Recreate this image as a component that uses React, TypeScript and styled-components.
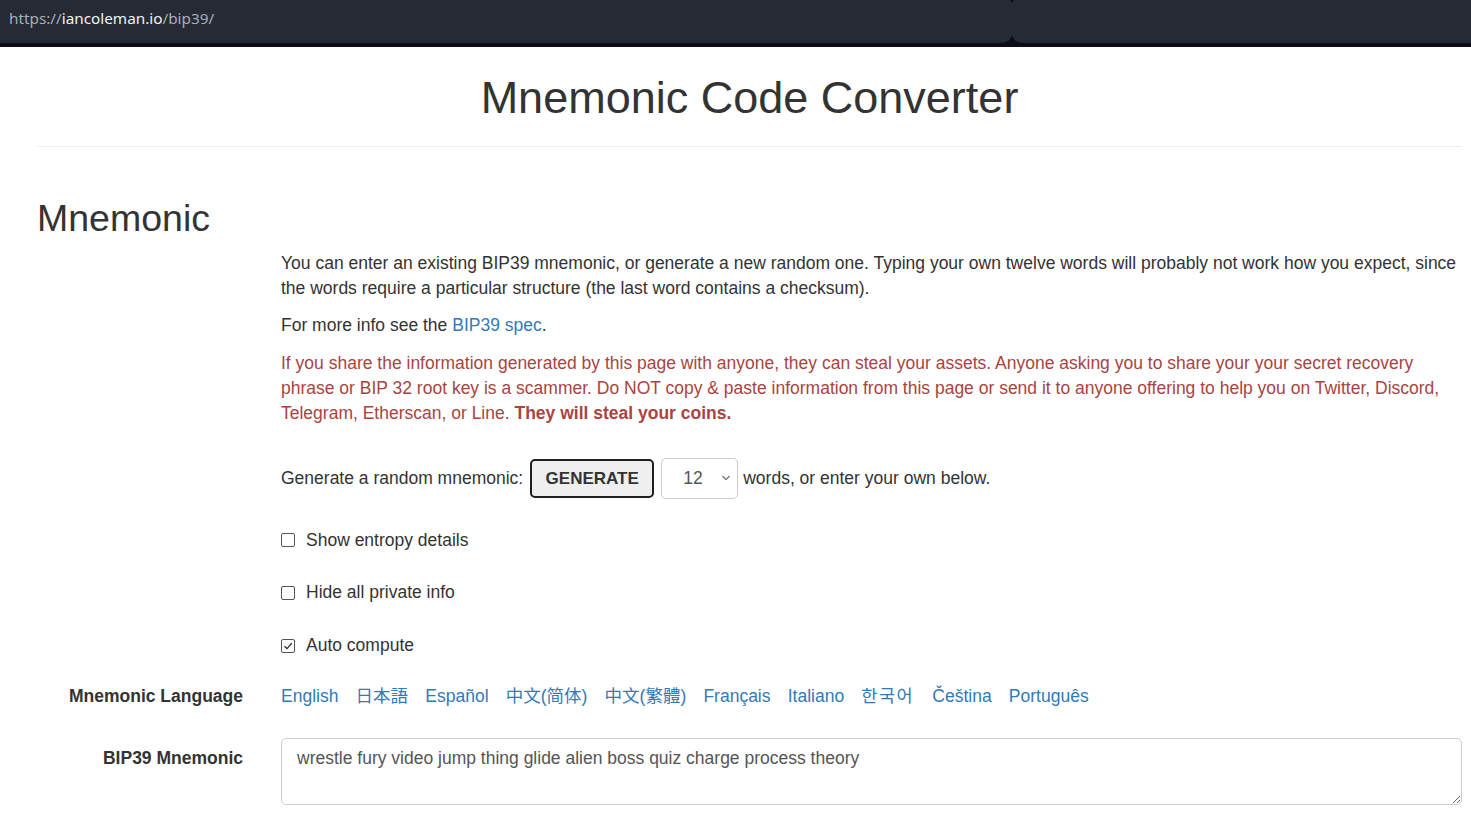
import * as React from "react"
import styled, { createGlobalStyle } from "styled-components"

const GlobalStyle = createGlobalStyle`
  html, body {
    margin: 0;
    padding: 0;
    background: #fff;
  }
  body {
    font-family: "Liberation Sans", Arial, "Noto Sans CJK SC", sans-serif;
    font-size: 17.5px;
    line-height: 25px;
    color: #333;
  }
  * { box-sizing: border-box; }
`

const languages = [
  { name: "English" },
  { name: "日本語", lang: "ja" },
  { name: "Español" },
  { name: "中文(简体)", lang: "zh-CN" },
  { name: "中文(繁體)", lang: "zh-TW" },
  { name: "Français" },
  { name: "Italiano" },
  { name: "한국어", lang: "ko" },
  { name: "Čeština" },
  { name: "Português" },
]

const options = [
  { label: "Show entropy details", checked: false, space: 28.5 },
  { label: "Hide all private info", checked: false, space: 27.5 },
  { label: "Auto compute", checked: true, space: 28 },
]

const App = () => {
  return (
    <>
      <GlobalStyle />
      <AddressBar>
        <Url>
          <UrlDim>https://</UrlDim>
          <UrlHost>iancoleman.io</UrlHost>
          <UrlDim>/bip39/</UrlDim>
        </Url>
        <TabNotch width="24" height="43" viewBox="0 0 24 43">
          <circle cx="12" cy="1" r="1.3" fill="#0b0c18" />
          <path d="M0 43 Q10 43 12 35 Q14 43 24 43 Z" fill="#0b0c18" />
        </TabNotch>
      </AddressBar>

      <Page>
        <PageHeader>
          <Title>Mnemonic Code Converter</Title>
        </PageHeader>

        <SectionTitle>Mnemonic</SectionTitle>

        <FormRow space={11.5}>
          <span />
          <div>
            <Para>
              You can enter an existing BIP39 mnemonic, or generate a new random one. Typing your own twelve words will probably not work how you expect, since the words require a particular structure (the last word contains a checksum).
            </Para>
            <Para>
              For more info see the <Link href="#">BIP39 spec</Link>.
            </Para>
            <Para danger>
              If you share the information generated by this page with anyone, they can steal your assets. Anyone asking you to share your your secret recovery phrase or BIP 32 root key is a scammer. Do NOT copy &amp; paste information from this page or send it to anyone offering to help you on Twitter, Discord, Telegram, Etherscan, or Line. <strong>They will steal your coins.</strong>
            </Para>
          </div>
        </FormRow>

        <FormRow space={19}>
          <span />
          <GenerateLine>
            <span>Generate a random mnemonic:</span>
            <GenerateButton>GENERATE</GenerateButton>
            <FakeSelect>
              <span>12</span>
              <svg width="10" height="6" viewBox="0 0 10 6">
                <path d="M1.5 1.2 L5 4.6 L8.5 1.2" fill="none" stroke="#555" strokeWidth="1.1" />
              </svg>
            </FakeSelect>
            <span>words, or enter your own below.</span>
          </GenerateLine>
        </FormRow>

        {options.map((o) => (
          <FormRow key={o.label} space={o.space}>
            <span />
            <CheckLine>
              <CheckBox>
                {o.checked && (
                  <svg width="10" height="10" viewBox="0 0 10 10">
                    <path d="M1.4 5.2 L4 7.6 L8.8 2.2" fill="none" stroke="#333" strokeWidth="1.3" />
                  </svg>
                )}
              </CheckBox>
              {o.label}
            </CheckLine>
          </FormRow>
        ))}

        <FormRow space={26}>
          <Label>Mnemonic Language</Label>
          <LangList>
            {languages.map((l) => (
              <Link key={l.name} href="#" lang={l.lang}>{l.name}</Link>
            ))}
          </LangList>
        </FormRow>

        <FormRow space={28.5}>
          <Label top={8}>BIP39 Mnemonic</Label>
          <TextArea
            defaultValue="wrestle fury video jump thing glide alien boss quiz charge process theory"
            spellCheck={false}
          />
        </FormRow>
      </Page>
    </>
  )
}

const AddressBar = styled.div`
  position: relative;
  height: 47px;
  background: #252a35;
  border-bottom: 4px solid #0b0c18;
  display: flex;
  align-items: center;
  padding: 0 0 0 9px;
`
const Url = styled.div`
  font: normal normal 400 15.3px/20px "Noto Sans", "Open Sans", sans-serif;
  margin-top: -7px;
`
const UrlDim = styled.span`
  color: #a9adb5;
`
const UrlHost = styled.span`
  color: #f1f2f4;
`
const TabNotch = styled.svg`
  position: absolute;
  left: 1000px;
  top: 0;
`
const Page = styled.div`
  padding: 0 9px 40px 37px;
`
const PageHeader = styled.div`
  padding: 25.5px 0 24px;
  border-bottom: 1px solid #eee;
`
const Title = styled.h1`
  margin: 0;
  text-align: center;
  font-size: 45px;
  line-height: 49.5px;
  font-weight: 400;
  color: #333;
`
const SectionTitle = styled.h2`
  margin: 51px 0 0;
  font-size: 37.5px;
  line-height: 41.25px;
  font-weight: 400;
  color: #333;
`
const FormRow = styled.div<{ space?: number }>`
  display: grid;
  grid-template-columns: 206px 1fr;
  column-gap: 38px;
  margin-top: ${(p) => (p.space !== undefined ? p.space : 0)}px;
`
const Label = styled.div<{ top?: number }>`
  text-align: right;
  font-weight: 700;
  padding-top: ${(p) => p.top || 0}px;
`
const Para = styled.p<{ danger?: boolean }>`
  margin: 0 0 12.5px;
  color: ${(p) => (p.danger ? "#a94442" : "#333")};
`
const Link = styled.a`
  color: #337ab7;
  text-decoration: none;
  &:lang(ja) { font-family: "Liberation Sans", "Noto Sans CJK JP", sans-serif; }
  &:lang(zh-TW) { font-family: "Liberation Sans", "Noto Sans CJK TC", sans-serif; }
  &:lang(ko) {
    font-family: "Liberation Sans", "Noto Sans CJK KR", sans-serif;
    letter-spacing: 1.5px;
    margin-right: 1px;
  }
`
const GenerateLine = styled.div`
  display: flex;
  align-items: center;
  height: 42px;
  & > span:first-child { margin-right: 7px; }
`
const GenerateButton = styled.button`
  height: 39px;
  width: 124px;
  padding: 0;
  margin-right: 7px;
  background: #efefef;
  border: 2px solid #1f1f1f;
  border-radius: 5px;
  font: normal normal 700 17px/1 "Liberation Sans", Arial, sans-serif;
  color: #333;
  cursor: pointer;
`
const FakeSelect = styled.div`
  height: 41px;
  width: 77px;
  margin-right: 5px;
  border: 1px solid #ccc;
  border-radius: 5px;
  display: flex;
  align-items: center;
  justify-content: space-between;
  padding: 0 6px 0 21px;
  color: #555;
`
const CheckLine = styled.label`
  display: flex;
  align-items: center;
  height: 25px;
`
const CheckBox = styled.span`
  width: 14px;
  height: 14px;
  margin-right: 11px;
  border: 1px solid #555;
  border-radius: 2px;
  display: flex;
  align-items: center;
  justify-content: center;
`
const LangList = styled.div`
  display: flex;
  flex-wrap: wrap;
  gap: 0 17.2px;
`
const TextArea = styled.textarea`
  display: block;
  width: 100%;
  height: 67px;
  padding: 7px 15px;
  border: 1px solid #ccc;
  border-radius: 5px;
  font: normal normal 400 17.5px/25px "Liberation Sans", Arial, sans-serif;
  color: #555;
  resize: vertical;
  outline: none;
`

export default App
